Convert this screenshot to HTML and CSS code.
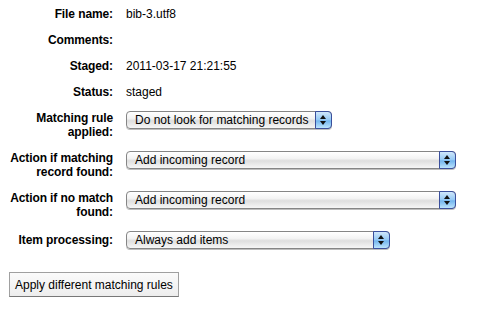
FILE: index.html
```html
<!DOCTYPE html>
<html lang="en">
<head>
    <meta charset="UTF-8">
    <title>Stage MARC records</title>
    <link rel="stylesheet" href="styles.css">
</head>
<body>
    <div class="info">
        <div class="label">File name:</div>
        <div class="value">bib-3.utf8</div>

        <div class="label">Comments:</div>
        <div class="value"></div>

        <div class="label">Staged:</div>
        <div class="value">2011-03-17 21:21:55</div>

        <div class="label">Status:</div>
        <div class="value">staged</div>

        <div class="label">Matching rule<br>applied:</div>
        <div class="value"><div class="select w1"><span>Do not look for matching records</span><i class="arrows"></i></div></div>

        <div class="label">Action if matching<br>record found:</div>
        <div class="value"><div class="select w2"><span>Add incoming record</span><i class="arrows"></i></div></div>

        <div class="label">Action if no match<br>found:</div>
        <div class="value"><div class="select w2"><span>Add incoming record</span><i class="arrows"></i></div></div>

        <div class="label mid">Item processing:</div>
        <div class="value"><div class="select w3"><span>Always add items</span><i class="arrows"></i></div></div>
    </div>
    <button class="apply">Apply different matching rules</button>
</body>
</html>
```

FILE: styles.css
```css
body { margin: 7px 8px; background: #fff; color: #000; font-family: "Liberation Sans", Arial, sans-serif; font-size: 12px; }
.info { display: grid; grid-template-columns: 105px auto; column-gap: 13px; row-gap: 12px; line-height: 14px; }
.label { font-weight: bold; text-align: right; letter-spacing: -0.1px; }
.label.mid { padding-top: 2px; }
.value { min-height: 14px; }
.select { position: relative; height: 16px; border: 1px solid #858585; border-radius: 4px; background: linear-gradient(#ffffff, #f3f3f3 40%, #dedede 55%, #f6f6f6); box-shadow: 0 1px 0 #bdbdbd; line-height: 16px; padding-left: 8px; box-sizing: content-box; }
.select span { display: block; }
.w1 { width: 196px; }
.w2 { width: 320px; }
.w3 { width: 254px; }
.arrows { position: absolute; right: -1px; top: -1px; width: 15px; height: 16px; border: 1px solid #3a4f9c; border-radius: 0 4px 4px 0; background: linear-gradient(#cfe7fb, #93c8f4 50%, #72b5ee 55%, #bce4fd); }
.arrows::before, .arrows::after { content: ""; position: absolute; left: 4px; border-left: 3.5px solid transparent; border-right: 3.5px solid transparent; }
.arrows::before { top: 3px; border-bottom: 4px solid #111; }
.arrows::after { top: 9px; border-top: 4px solid #111; }
.apply { margin-top: 23px; margin-left: 1px; height: 25px; padding: 0 5px; border: 1px solid #a0a0a0; border-bottom-color: #777; border-radius: 0; background: linear-gradient(#fbfbfb, #ededed); font-family: "Liberation Sans", Arial, sans-serif; font-size: 12px; color: #000; }
```
